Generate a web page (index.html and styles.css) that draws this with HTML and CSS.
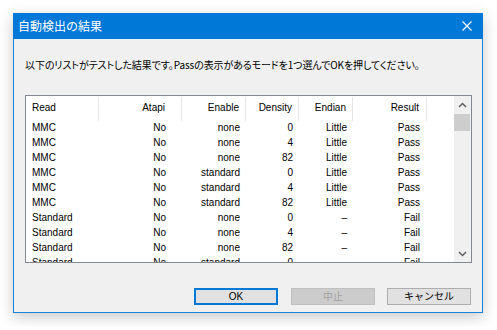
FILE: index.html
```html
<!DOCTYPE html>
<html lang="ja">
<head>
<meta charset="utf-8">
<title>自動検出の結果</title>
<link rel="stylesheet" href="styles.css">
</head>
<body>
<div class="window">
  <div class="titlebar">
    <span class="title">自動検出の結果</span>
    <svg class="close" width="10" height="10" viewBox="0 0 10 10"><path d="M0.5 0.5 L9.5 9.5 M9.5 0.5 L0.5 9.5" stroke="#fff" stroke-width="1.1" fill="none"/></svg>
  </div>
  <div class="content">
    <p class="msg">以下のリストがテストした結果です。Passの表示があるモードを1つ選んでOKを押してください。</p>
    <div class="list">
      <div class="table">
        <div class="row head">
          <span class="c1">Read</span><span class="c2">Atapi</span><span class="c3">Enable</span><span class="c4">Density</span><span class="c5">Endian</span><span class="c6">Result</span>
        </div>
        <div class="row"><span class="c1">MMC</span><span class="c2">No</span><span class="c3">none</span><span class="c4">0</span><span class="c5">Little</span><span class="c6">Pass</span></div>
        <div class="row"><span class="c1">MMC</span><span class="c2">No</span><span class="c3">none</span><span class="c4">4</span><span class="c5">Little</span><span class="c6">Pass</span></div>
        <div class="row"><span class="c1">MMC</span><span class="c2">No</span><span class="c3">none</span><span class="c4">82</span><span class="c5">Little</span><span class="c6">Pass</span></div>
        <div class="row"><span class="c1">MMC</span><span class="c2">No</span><span class="c3">standard</span><span class="c4">0</span><span class="c5">Little</span><span class="c6">Pass</span></div>
        <div class="row"><span class="c1">MMC</span><span class="c2">No</span><span class="c3">standard</span><span class="c4">4</span><span class="c5">Little</span><span class="c6">Pass</span></div>
        <div class="row"><span class="c1">MMC</span><span class="c2">No</span><span class="c3">standard</span><span class="c4">82</span><span class="c5">Little</span><span class="c6">Pass</span></div>
        <div class="row"><span class="c1">Standard</span><span class="c2">No</span><span class="c3">none</span><span class="c4">0</span><span class="c5">–</span><span class="c6">Fail</span></div>
        <div class="row"><span class="c1">Standard</span><span class="c2">No</span><span class="c3">none</span><span class="c4">4</span><span class="c5">–</span><span class="c6">Fail</span></div>
        <div class="row"><span class="c1">Standard</span><span class="c2">No</span><span class="c3">none</span><span class="c4">82</span><span class="c5">–</span><span class="c6">Fail</span></div>
        <div class="row"><span class="c1">Standard</span><span class="c2">No</span><span class="c3">standard</span><span class="c4">0</span><span class="c5">–</span><span class="c6">Fail</span></div>
      </div>
      <div class="scrollbar">
        <div class="arrow"><svg width="9" height="6" viewBox="0 0 9 6"><path d="M1 5 L4.5 1.5 L8 5" stroke="#606060" stroke-width="1.5" fill="none"/></svg></div>
        <div class="track"><div class="thumb"></div></div>
        <div class="arrow"><svg width="9" height="6" viewBox="0 0 9 6"><path d="M1 1 L4.5 4.5 L8 1" stroke="#606060" stroke-width="1.5" fill="none"/></svg></div>
      </div>
    </div>
    <div class="buttons">
      <button class="btn default">OK</button>
      <button class="btn disabled">中止</button>
      <button class="btn">キャンセル</button>
    </div>
  </div>
</div>
</body>
</html>
```

FILE: styles.css
```css
html, body {
  margin: 0;
  background: #ffffff;
}
body {
  padding: 13px;
  font-family: "Liberation Sans", "Noto Sans CJK JP", sans-serif;
  font-size: 10px;
  color: #000;
}
.window {
  box-sizing: border-box;
  width: 470px;
  height: 300px;
  border: 1px solid #1a83d8;
  border-top: none;
  background: #f0f0f0;
  box-shadow: 0 4px 14px rgba(0, 0, 0, 0.22);
  display: flex;
  flex-direction: column;
}
.titlebar {
  height: 26px;
  margin: 0 -1px;
  background: #0078d7;
  display: flex;
  align-items: center;
  justify-content: space-between;
  padding: 0 11px 0 5px;
  box-sizing: border-box;
}
.title {
  color: #fff;
  font-family: "Noto Sans CJK JP", sans-serif;
  font-size: 12px;
  line-height: 14px;
}
.close {
  display: block;
}
.content {
  flex: 1;
  padding: 19px 10px 7px 11px;
  display: flex;
  flex-direction: column;
}
.msg {
  margin: 0;
  height: 14px;
  line-height: 14px;
  font-family: "Noto Sans CJK JP", sans-serif;
  font-size: 10px;
  letter-spacing: -0.1px;
  font-feature-settings: "palt";
  white-space: nowrap;
}
.list {
  margin-top: 23px;
  height: 168px;
  box-sizing: border-box;
  border: 1px solid #828790;
  background: #fff;
  display: flex;
  overflow: hidden;
}
.table {
  flex: 1;
  overflow: hidden;
}
.row {
  display: flex;
  height: 15px;
  line-height: 15px;
  white-space: nowrap;
}
.row span {
  box-sizing: border-box;
  flex: none;
  text-align: right;
  padding-right: 6px;
}
.row.head {
  height: 24px;
  line-height: 22px;
}
.row.head span {
  border-right: 1px solid #e5e5e5;
  height: 24px;
  margin-top: 1px;
}
.c1 { width: 73px; text-align: left !important; padding-left: 6px; }
.c2 { width: 83px; padding-right: 16px !important; }
.c3 { width: 64px; }
.c4 { width: 53px; }
.c5 { width: 54px; }
.c6 { width: 74px; padding-right: 7px !important; }
.scrollbar {
  width: 17px;
  background: #f0f0f0;
  display: flex;
  flex-direction: column;
}
.arrow {
  height: 17px;
  display: flex;
  align-items: center;
  justify-content: center;
}
.track {
  flex: 1;
  padding: 1px 1px 0 0;
}
.thumb {
  height: 17px;
  background: #cdcdcd;
}
.buttons {
  margin-top: 25px;
  margin-right: 1px;
  display: flex;
  justify-content: flex-end;
  gap: 12px;
}
.btn {
  box-sizing: border-box;
  width: 84px;
  height: 17px;
  padding: 0;
  font-family: "Liberation Sans", "Noto Sans CJK JP", sans-serif;
  font-size: 10px;
  line-height: 13px;
  color: #000;
  background: #e1e1e1;
  border: 1px solid #adadad;
}
.btn.default {
  border: 2px solid #0078d7;
  margin-right: 1px;
}
.btn.disabled {
  background: #cccccc;
  border-color: #bfbfbf;
  color: #a0a0a0;
}
```
